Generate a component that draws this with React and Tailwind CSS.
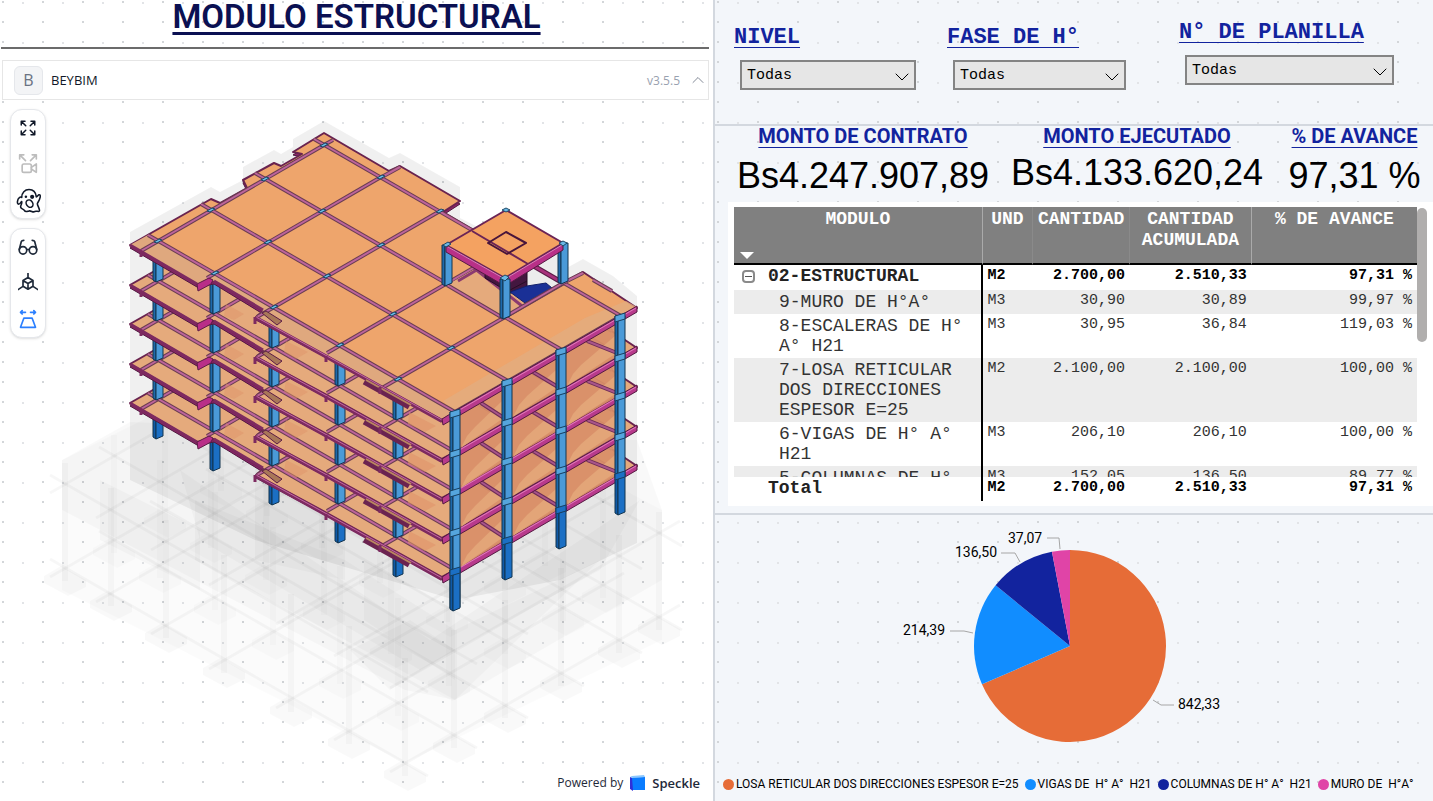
/**
 * App.jsx
 * Structural module dashboard: 3D viewer on the left,
 * filters, contract figures, progress table and volume chart on the right.
 */
import { ChevronDown, ChevronUp } from 'lucide-react';

const DOTS =
  'bg-[radial-gradient(circle,#d3d6d9_1px,transparent_1px),radial-gradient(circle,#e2e4e7_1px,transparent_1px)] bg-[length:40px_20px,40px_40px] bg-[position:-17px_-8px,3px_23px]';

/* ---------- 3D model ---------- */

// grid of the building: columns along the front, bays along the depth
const FRONT = [[158, 241], [215, 273], [274, 307], [340, 345], [398, 379], [455, 412]];
const DEPTH = [[0, 0], [53, -31], [107, -62], [166, -96]];
const LEVELS = [158, 119, 79, 40, 0];

const node = (i, j) => [FRONT[i][0] + DEPTH[j][0], FRONT[i][1] + DEPTH[j][1]];
const pts = (list) => list.map((p) => p.join(',')).join(' ');

const SLAB = [
  [130, 245], [211, 199], [220, 203], [247, 188], [243, 180], [274, 163], [281, 166],
  [302, 154], [293, 152], [324, 133], [389, 171], [400, 166], [460, 201], [443, 212],
  [563, 283], [583, 272], [637, 308], [455, 412], [442, 419], [327, 355], [256, 317],
  [263, 311], [214, 281], [197, 284],
];
const SKIRT = [[130, 245], [197, 284], [214, 281], [263, 311], [256, 317], [442, 419], [455, 412], [158, 241], [148, 235]];

const Beam = ({ a, b }) => (
  <g>
    <line x1={a[0]} y1={a[1]} x2={b[0]} y2={b[1]} stroke="#6a3d52" strokeWidth="4" />
    <line x1={a[0]} y1={a[1]} x2={b[0]} y2={b[1]} stroke="#bd649b" strokeWidth="2" />
  </g>
);

const Column = ({ x, top, bottom, deep }) => (
  <g stroke="#12344f" strokeWidth="1">
    <path d={`M${x - 5} ${top}V${bottom - 1}L${x - 2} ${bottom + 1}V${top}Z`} fill={deep ? '#0f5aa8' : '#1e6aac'} />
    <path d={`M${x - 2} ${top}V${bottom + 1}L${x + 5} ${bottom - 2}V${top}Z`} fill={deep ? '#1b6fc4' : '#4a9ad8'} />
  </g>
);

const Floor = ({ roof }) => (
  <g>
    <polygon points={pts(SLAB)} transform="translate(0 3)" fill="#8b2468" stroke="#4f1a3e" />
    <polygon points={pts(SLAB)} fill={roof ? '#eea56c' : '#e5aa7c'} stroke="#69234f" strokeWidth="2" strokeLinejoin="round" />
    {roof && <polygon points={pts(SKIRT)} fill="#dfa87e" />}
    {roof && <polygon points="455,412 637,307 626,301 585,318 443,401" fill="#e2ad80" opacity=".8" />}
    {FRONT.map((p, i) => {
      const out = [[-17, 10], [-8, 5], [-17, 10], [-13, 8], [-16, 9], [0, 0]][i];
      return <Beam key={i} a={[p[0] + out[0], p[1] + out[1]]} b={node(i, 3)} />;
    })}
    {DEPTH.map((d, j) => {
      const start = node(0, j);
      return <Beam key={j} a={[start[0] - 10, start[1] - 6]} b={node(5, j)} />;
    })}
    <Beam a={[324, 145]} b={[333, 140]} />
    <Beam a={[380, 178]} b={[400, 167]} />
    <Beam a={[593, 280]} b={[612, 291]} />
    <Beam a={[583, 273]} b={[563, 283]} />
    <polyline points="130,245 197,284" fill="none" stroke="#7d2a60" strokeWidth="3" />
    <polyline points="214,281 263,310" fill="none" stroke="#7d2a60" strokeWidth="3" />
    <polyline points="256,318 327,357 442,421" fill="none" stroke="#7d2a60" strokeWidth="4" />
    <polyline points="256,317 327,356 442,420" fill="none" stroke="#c067a0" strokeWidth="1" />
    <polygon points="197,284 209,278 213,280 211,284 198,291" fill="#b92e88" stroke="#5b1c46" />
    <polygon points="262,313 266,311 282,321 277,325" fill="#a87758" stroke="#5b1c46" />
    <path d="M364 382L409 407" stroke="#6b2350" strokeWidth="5" />
    <path d="M366 380L411 405" stroke="#b98660" strokeWidth="2" />
    <path d="M255 317v7M326 356v6M380 387v7M141 252v5" stroke="#7d2a60" strokeWidth="3" />
    <polygon points="455,411 637,306 637,312 455,418 443,425 442,419" fill="#b83a8c" stroke="#551a42" />
    <path d="M456 412L636 308" stroke="#e07cbc" strokeWidth="1" />
  </g>
);

// darker inside of one storey, seen between the right-hand columns
const Storey = ({ y }) => (
  <g transform={`translate(0 ${y})`}>
    {[[455, 412, 507, 381], [507, 381, 561, 350], [561, 350, 620, 316]].map(([x1, y1, x2, y2]) => (
      <g key={x1}>
        <polygon points={pts([[x1, y1], [x2, y2], [x2, y2 + 39], [x1, y1 + 39]])} fill="#d98f68" opacity=".92" />
        <path
          d={`M${x1 + 6} ${y1 + 36}L${x1 + 12} ${y1 + 24}L${x1 + 20} ${y1 + 15}L${x2 - 5} ${y2 + 20}V${y2 + 38}Z`}
          fill="#e5aa7c"
          opacity=".8"
        />
        <path d={`M${x1 + 26} ${y1 - 9}L${x2 - 3} ${y2 + 37}`} stroke="#6d2c57" strokeWidth="4" />
        <path d={`M${x1 + 26} ${y1 - 9}L${x2 - 3} ${y2 + 37}`} stroke="#a8558a" strokeWidth="2" />
      </g>
    ))}
    <polygon points="226,304 244,314 234,320 224,316" fill="#e0936a" opacity=".5" />
    <polygon points="286,341 308,352 296,359 284,352" fill="#e0936a" opacity=".5" />
    <polygon points="409,412 436,426 425,432 408,424" fill="#e0936a" opacity=".6" />
  </g>
);

const Tower = () => (
  <g strokeLinejoin="round">
    <polygon points="447,285 503,318 563,283 506,251" fill="#e5aa7c" />
    <polygon points="527,262 563,248 563,283 540,297 527,291" fill="#ececec" />
    <path d="M458 281L480 268M474 268L522 306" stroke="#8b3a70" strokeWidth="3" />
    <polygon points="485,260 527,262 527,291 510,293 485,278" fill="#43173f" stroke="#260d25" />
    <path d="M510 290L527 281" stroke="#260d25" />
    <polygon points="510,292 527,286 546,283 552,288 525,303" fill="#1a3096" stroke="#12206a" />
    <path d="M532 265L563 283" stroke="#5b1c46" strokeWidth="5" />
    <path d="M532 265L563 283" stroke="#a8317c" strokeWidth="3" />
    <Beam a={[503, 318]} b={[563, 283]} />
    <Beam a={[447, 285]} b={[503, 318]} />
    <Column x={447} top={245} bottom={285} />
    <Column x={563} top={243} bottom={283} />
    <polygon points="446,245 505,278 563,243 563,250 505,286 446,252" fill="#b83088" stroke="#551a42" />
    <polygon points="506,210 563,243 505,278 446,245" fill="#f4a261" stroke="#6b2456" strokeWidth="2" />
    <path d="M448 247L505 279L562 245" fill="none" stroke="#dd7fbd" strokeWidth="1" />
    <path d="M472 231L528 264" stroke="#6b2456" strokeWidth="2" />
    <polygon points="506,232 526,243 507,254 488,243" fill="none" stroke="#48153b" strokeWidth="2" />
    <Column x={505} top={279} bottom={318} />
    <g fill="#6cb8e6" stroke="#1d4966">
      <polygon points="443,245 448,242 451,244 446,247" />
      <polygon points="502,210 506,208 510,210 506,212" />
      <polygon points="559,243 563,241 567,243 563,246" />
      <polygon points="500,278 505,275 509,277 505,281" />
    </g>
  </g>
);

const BASE_FRONT = [[65, 568], [111, 593], [166, 625], [224, 660], [291, 699], [349, 731], [405, 763]];
const BASE_DEPTH = [[0, 0], [49, -28], [100, -58], [156, -90], [214, -123], [254, -146]];

// faded foundations and outer shell
const Ghost = () => (
  <g>
    <g fill="#000" fillOpacity=".06">
      <polygon points="130,232 211,187 220,192 243,180 243,167 274,150 281,154 293,147 293,139 324,121 389,158 400,153 460,187 460,218 563,270 583,259 613,276 637,296 637,543 560,580 455,600 255,540 130,480" />
    </g>
    <g fill="#000" fillOpacity=".024">
      <polygon points="62,460 130,422 637,440 662,510 662,580 455,700 405,690 62,510" />
      <polygon points="62,460 324,330 662,510 662,640 405,763 62,590" fillOpacity=".015" />
      <polygon points="180,470 430,640 640,500 600,570 420,670 200,540" />
      <polygon points="195,500 345,560 455,630 600,560 455,700 345,640 195,560" />
      <polygon points="255,450 345,500 345,580 255,560" />
      <polygon points="364,560 455,610 455,680 364,620" />
      <polygon points="100,480 200,530 200,590 100,540" />
      <polygon points="350,650 410,620 455,650 390,690" />
    </g>
    {BASE_FRONT.map((p, i) =>
      BASE_DEPTH.map((d, j) => {
        const x = p[0] + d[0];
        const y = p[1] + d[1];
        const edge = i === 6 || j === 0;
        return (
          <g key={`${i}-${j}`} fill="#000" fillOpacity={edge ? '.024' : '.014'}>
            <polygon points={pts([[x - 21, y + 8], [x - 4, y - 2], [x + 21, y + 12], [x + 21, y + 19], [x + 3, y + 28], [x - 21, y + 15]])} />
            <rect x={x - 3} y={y - 105} width="6" height="118" />
          </g>
        );
      })
    )}
    <g stroke="#000" strokeOpacity=".03" strokeWidth="3">
      {[0, -84].map((dy) => (
        <g key={dy}>
          {BASE_FRONT.map((p) => (
            <line key={p[0]} x1={p[0] - 15} y1={p[1] + 9 + dy} x2={p[0] + 275} y2={p[1] - 158 + dy} />
          ))}
          {BASE_DEPTH.map((d) => (
            <line key={d[0]} x1={50 + d[0]} y1={559 + d[1] + dy} x2={428 + d[0]} y2={776 + d[1] + dy} />
          ))}
        </g>
      ))}
    </g>
  </g>
);

const Building = () => (
  <svg viewBox="0 100 713 701" className="block w-full" role="img" aria-label="Modelo 3D de la estructura">
    <Ghost />
    {FRONT.map(([x, y]) => (
      <Column key={x} x={x} top={y + 158} bottom={y + 197} deep />
    ))}
    {LEVELS.map((y, n) => (
      <g key={y}>
        <g transform={`translate(0 ${y})`}>
          <Floor roof={y === 0} />
        </g>
        {y > 0 && <Storey y={LEVELS[n + 1]} />}
        {y > 0 &&
          FRONT.slice(0, 5).map(([x, top]) => (
            <Column key={x} x={x} top={top + LEVELS[n + 1]} bottom={top + y} />
          ))}
      </g>
    ))}
    {[[455, 412], [507, 381], [561, 350], [620, 316]].map(([x, y]) => (
      <g key={x}>
        <Column x={x} top={y + 158} bottom={y + 198} deep />
        <Column x={x} top={y} bottom={y + 162} />
        {LEVELS.map((dy) => (
          <polygon
            key={dy}
            points={pts([[x - 5, y + dy], [x + 5, y + dy - 3], [x + 5, y + dy + 3], [x - 5, y + dy + 6]])}
            fill={dy === 158 ? '#1b6fc4' : '#55a5dd'}
            stroke="#173f60"
          />
        ))}
      </g>
    ))}
    <g fill="#6cb8e6" stroke="#1d4966">
      {FRONT.slice(0, 5).map((p, i) =>
        DEPTH.map((d, j) => {
          const [x, y] = node(i, j);
          if (i >= 3 && j >= 2) return null;
          return <polygon key={`${i}-${j}`} points={pts([[x - 4, y + 1], [x + 1, y - 2], [x + 4, y - 1], [x - 1, y + 2]])} />;
        })
      )}
    </g>
    <Tower />
  </svg>
);

/* ---------- viewer tool icons ---------- */

const Stroke = ({ children, size = 20, width = 2 }) => (
  <svg width={size} height={size} viewBox="0 0 24 24" fill="none" stroke="currentColor" strokeWidth={width} strokeLinecap="round" strokeLinejoin="round">
    {children}
  </svg>
);

const FIT_ICON = (
  <Stroke size={18}>
    <path d="M3 8V3h5M4 4l5 5M16 3h5v5M20 4l-5 5M3 16v5h5M4 20l5-5M21 16v5h-5M20 20l-5-5" />
  </Stroke>
);
const CAMERA_ICON = (
  <Stroke>
    <path d="M2 6V1h5M3 2l6 6M17 1h5v5M21 2l-6 6" />
    <rect x="5" y="12" width="11" height="10" rx="2" />
    <path d="M16 16l6-4v10l-6-4" />
  </Stroke>
);
const GHOST_ICON = (
  <Stroke size={25} width={1.5}>
    <path d="M5.500 9C5.500 4.500 8.500 1.500 12.500 1.500S19 4 19.500 8.500C20.500 8.500 21 7 22 6.500 23.500 6 23.500 8 23 9.500 22.500 12 21 13.500 20.500 15 20.500 17 23 20 22.500 22 21.500 23.500 20 21.500 18 22.500 16.500 24 14.500 21.500 12.500 22 10.500 22.500 9 23.500 8 21.500 7.500 20 5 20.500 4.500 18.500 4 17 6 15.500 5.500 13 4.500 13.500 4 15.500 2.500 15.500.500 15.500 1.500 10.500 3 9.500 4 8.500 5 8.500 5.500 9Z" />
    <ellipse cx="13" cy="15" rx="3" ry="3.800" transform="rotate(-35 13 15)" />
    <circle cx="9.500" cy="8.500" r="1.200" fill="currentColor" stroke="none" />
    <circle cx="15.500" cy="8.500" r="2" fill="currentColor" stroke="none" />
  </Stroke>
);
const GLASSES_ICON = (
  <Stroke>
    <circle cx="6" cy="16" r="4.500" />
    <circle cx="18" cy="16" r="4.500" />
    <path d="M10.500 15h3M1.500 15L4 5.500C4.300 4.500 5 4 7 4M22.500 15L20 5.500C19.700 4.500 19 4 17 4" />
  </Stroke>
);
const AXES_ICON = (
  <Stroke>
    <path d="M12 5.500l6 3.500v7l-6 3.500-6-3.500V9ZM6 9l6 3.500L18 9M12 12.500v7M12 5.500V0M6 16l-6 4M18 16l6 4" />
  </Stroke>
);
const PERSPECTIVE_ICON = (
  <Stroke>
    <path d="M7 11h10l4 11H3ZM3 4h6M5 2L3 4l2 2M15 4h6M19 2l2 2-2 2" />
  </Stroke>
);

const ToolCard = ({ tools }) => (
  <div className="flex w-9 flex-col rounded-xl border border-gray-200 bg-white shadow">
    {tools.map(({ label, icon, color }) => (
      <button key={label} type="button" aria-label={label} className={`flex h-9 items-center justify-center ${color}`}>
        {icon}
      </button>
    ))}
  </div>
);

const Viewer = () => (
  <section className={`min-w-0 border-r-2 border-[#d3d8df] bg-white ${DOTS}`}>
    <h1 className="h-[47px] pt-px text-center font-['Roboto'] text-[33px] leading-8 font-semibold text-[#0b1052] underline decoration-[3px] underline-offset-4">
      MODULO ESTRUCTURAL
    </h1>
    <div className="mr-1 ml-px border-t-2 border-[#6b6b6b]" />

    <header className="mt-[11px] mr-1 ml-0.5 flex h-10 items-center border border-[#e6e6e6] bg-white pl-[11px] font-['Open_Sans']">
      <span className="flex size-[29px] items-center justify-center rounded-md border border-gray-200 bg-gray-100 text-base text-gray-500">B</span>
      <span className="ml-2 pt-0.5 text-[13px] text-gray-900">BEYBIM</span>
      <span className="ml-auto pt-0.5 text-[12px] text-gray-400">v3.5.5</span>
      <button type="button" aria-label="Ocultar barra" className="ml-2 text-gray-500">
        <ChevronUp size={20} strokeWidth={1} />
      </button>
    </header>

    <div className="relative">
      <Building />
      <div className="absolute top-[9px] left-2.5 flex flex-col gap-[9px]">
        <ToolCard
          tools={[
            { label: 'Ajustar vista', icon: FIT_ICON, color: 'text-gray-900' },
            { label: 'Enfocar selección', icon: CAMERA_ICON, color: 'text-[#bdbdbd]' },
            { label: 'Modo fantasma', icon: GHOST_ICON, color: 'text-gray-900' },
          ]}
        />
        <ToolCard
          tools={[
            { label: 'Modo de vista', icon: GLASSES_ICON, color: 'text-gray-800' },
            { label: 'Ejes', icon: AXES_ICON, color: 'text-gray-800' },
            { label: 'Perspectiva', icon: PERSPECTIVE_ICON, color: 'text-blue-500' },
          ]}
        />
      </div>
      <a href="#speckle" className="absolute right-[13px] bottom-2 flex items-center font-['Open_Sans'] text-[13px] leading-5 text-gray-800">
        <span className="text-[12px]">Powered by</span>
        <svg width="17" height="17" viewBox="0 0 17 17" className="mx-1.5">
          <path d="M1 2l3 1v13l-3-2Z" fill="#3030d8" />
          <path d="M1 2l2-1 12-1 1 2-12 1Z" fill="#8cc8ff" />
          <path d="M3 3l13-1v13H4Z" fill="#0a7cff" />
        </svg>
        <span className="font-semibold">Speckle</span>
      </a>
    </div>
  </section>
);

/* ---------- filters ---------- */

const Filter = ({ id, label, pad, width }) => (
  <div className={pad}>
    <label
      htmlFor={id}
      className="block font-['Liberation_Mono'] text-[22px] leading-6 font-bold whitespace-nowrap text-[#12239e] underline decoration-1 underline-offset-4"
    >
      {label}
    </label>
    <div className={`relative mt-2.5 ml-1.5 ${width}`}>
      <select
        id={id}
        className="block h-[30px] w-full appearance-none border-2 border-[#848484] bg-[#e6e6e6] pt-0.5 pl-[5px] font-['Liberation_Mono'] text-[15px] text-black"
      >
        <option>Todas</option>
      </select>
      <ChevronDown size={24} strokeWidth={1} className="pointer-events-none absolute top-[5px] right-0.5" />
    </div>
  </div>
);

/* ---------- figures ---------- */

const Figure = ({ title, value, gap }) => (
  <div className="flex flex-col items-center whitespace-nowrap">
    <h2 className="font-['Roboto'] text-[20px] leading-5 font-bold text-[#12239e] underline decoration-1 underline-offset-4">{title}</h2>
    <p className={`font-['Liberation_Sans'] text-4xl leading-10 text-black ${gap}`}>{value}</p>
  </div>
);

/* ---------- table ---------- */

const ROWS = [
  ['9-MURO DE H°A°', 'M3', '30,90', '30,89', '99,97 %'],
  ['8-ESCALERAS DE H° A° H21', 'M3', '30,95', '36,84', '119,03 %'],
  ['7-LOSA RETICULAR DOS DIRECCIONES ESPESOR E=25', 'M2', '2.100,00', '2.100,00', '100,00 %'],
  ['6-VIGAS DE H° A° H21', 'M3', '206,10', '206,10', '100,00 %'],
  ['5-COLUMNAS DE H° A° H21', 'M3', '152,05', '136,50', '89,77 %'],
];

const Values = ({ items }) =>
  items.map((item, i) => (
    <td key={i} className={i === 0 ? 'pt-[3px] pl-[5px] text-left' : 'pt-[3px] pr-[5px] text-right whitespace-nowrap'}>
      {item}
    </td>
  ));

const Columns = () => (
  <colgroup>
    <col className="w-[36.4%]" />
    <col className="w-[7.4%]" />
    <col className="w-[14.2%]" />
    <col className="w-[17.8%]" />
    <col />
  </colgroup>
);

const TABLE = "w-full table-fixed border-separate border-spacing-0 font-['Liberation_Mono'] text-[15px] leading-4 text-[#333]";

const ProgressTable = () => (
  <div className="ml-[13px] flex bg-white pt-[5px] pr-1.5 pb-[5px] pl-1.5">
    <div className="min-w-0 flex-1">
      <div className="h-[270px] overflow-hidden">
        <table className={TABLE}>
          <Columns />
          <thead>
            <tr className="h-[58px] bg-[#808080] align-top text-lg leading-[21px] text-white">
              <th className="relative border-r border-b-2 border-r-[#aaa] border-b-black pt-0.5">
                MODULO
                <span className="absolute bottom-1 left-1.5 size-0 border-x-[7px] border-t-[7px] border-x-transparent border-t-white" />
              </th>
              <th className="border-r border-b-2 border-r-[#8a8a8a] border-b-black pt-0.5">UND</th>
              <th className="border-r border-b-2 border-r-[#8a8a8a] border-b-black pt-0.5">CANTIDAD</th>
              <th className="border-r border-b-2 border-r-[#aaa] border-b-black pt-0.5">CANTIDAD ACUMULADA</th>
              <th className="border-b-2 border-b-black pt-0.5">% DE AVANCE</th>
            </tr>
          </thead>
          <tbody>
            <tr className="h-[25px] bg-white align-top font-bold text-black">
              <th className="border-r-2 border-black text-left text-lg leading-5 text-[#222]">
                <span className="flex items-center pt-px pl-2">
                  <button type="button" aria-label="Contraer" className="mr-[13px] flex size-[13px] items-center justify-center rounded-sm border-2 border-[#8a8a8a]">
                    <span className="h-px w-[7px] bg-[#555]" />
                  </button>
                  02-ESTRUCTURAL
                </span>
              </th>
              <Values items={['M2', '2.700,00', '2.510,33', '97,31 %']} />
            </tr>
            {ROWS.map(([name, ...values]) => (
              <tr key={name} className="align-top odd:bg-white even:bg-[#ececec]">
                <th className="border-r-2 border-black pt-0.5 pr-3 pb-0.5 pl-[45px] text-left text-lg leading-5 font-normal">{name}</th>
                <Values items={values} />
              </tr>
            ))}
          </tbody>
        </table>
      </div>
      <table className={TABLE}>
        <Columns />
        <tfoot>
          <tr className="h-6 bg-white align-top font-bold text-black">
            <th className="border-r-2 border-black pt-px pl-[34px] text-left text-lg leading-5 text-[#222]">Total</th>
            <Values items={['M2', '2.700,00', '2.510,33', '97,31 %']} />
          </tr>
        </tfoot>
      </table>
    </div>
    <div className="mt-px h-[134px] w-2.5 rounded-full bg-[#b0aead]" />
  </div>
);

/* ---------- chart ---------- */

const SLICES = [
  { name: 'LOSA RETICULAR DOS DIRECCIONES ESPESOR E=25', value: 842.33, fill: '#e66c37', dot: 'bg-[#e66c37]' },
  { name: 'VIGAS DE  H° A°  H21', value: 214.39, fill: '#118dff', dot: 'bg-[#118dff]' },
  { name: 'COLUMNAS DE H° A°  H21', value: 136.5, fill: '#12239e', dot: 'bg-[#12239e]' },
  { name: 'MURO DE  H°A°', value: 37.07, fill: '#e044a7', dot: 'bg-[#e044a7]' },
];

const LABELS = [
  { text: '842,33', x: 463, y: 193, line: '438,184 446,189 459,189' },
  { text: '214,39', x: 188, y: 119, line: '235,115 249,115 258,117' },
  { text: '136,50', x: 240, y: 41, line: '286,37 300,37 305,46' },
  { text: '37,07', x: 293, y: 27, line: '332,22 344,22 345,33' },
];

const Pie = () => {
  const total = SLICES.reduce((sum, s) => sum + s.value, 0);
  const point = (part) => {
    const angle = (part / total) * 2 * Math.PI;
    return `${355 + 96 * Math.sin(angle)} ${130 - 96 * Math.cos(angle)}`;
  };
  let from = 0;

  return (
    <svg viewBox="0 0 718 258" className="block w-full" role="img" aria-label="Volumen por elemento">
      {SLICES.map(({ name, value, fill }) => {
        const start = from;
        from += value;
        return <path key={name} fill={fill} d={`M355 130L${point(start)}A96 96 0 ${value > total / 2 ? 1 : 0} 1 ${point(from)}Z`} />;
      })}
      {LABELS.map(({ text, x, y, line }) => (
        <g key={text}>
          <polyline points={line} fill="none" stroke="#a6a6a6" />
          <text x={x} y={y} fontSize="14" fontFamily="Roboto">{text}</text>
        </g>
      ))}
    </svg>
  );
};

const App = () => (
  <main className="grid min-h-screen grid-cols-[715fr_718fr] overflow-hidden">
    <Viewer />

    <div className={`flex min-w-0 flex-col bg-[#f3f6fa] ${DOTS}`}>
      <section className="grid h-[126px] grid-cols-[213fr_232fr_254fr] border-b-2 border-[#d3d8df] pl-[19px]">
        <Filter id="nivel" label="NIVEL" pad="pt-[26px]" width="w-44" />
        <Filter id="fase" label="FASE DE H°" pad="pt-[26px]" width="w-[173px]" />
        <Filter id="planilla" label="N° DE PLANILLA" pad="pt-[21px]" width="w-[209px]" />
      </section>

      <section className="border-b-2 border-[#d3d8df] pb-[7px]">
        <div className="grid h-[76px] grid-cols-[258fr_290fr_145fr] pr-1.5 pl-[19px]">
          <Figure title="MONTO DE CONTRATO" value="Bs4.247.907,89" gap="mt-2.5" />
          <Figure title="MONTO EJECUTADO" value="Bs4.133.620,24" gap="mt-[7px]" />
          <Figure title="% DE AVANCE" value="97,31 %" gap="mt-2.5" />
        </div>
        <ProgressTable />
      </section>

      <section className="pt-px">
        <Pie />
        <ul className="flex gap-1.5 pl-2 font-['Roboto'] text-[12px] leading-5 whitespace-pre text-black">
          {SLICES.map(({ name, dot }) => (
            <li key={name} className="flex items-center gap-0.5">
              <span className={`size-[11px] rounded-full ${dot}`} />
              {name}
            </li>
          ))}
        </ul>
      </section>
    </div>
  </main>
);

export default App;
